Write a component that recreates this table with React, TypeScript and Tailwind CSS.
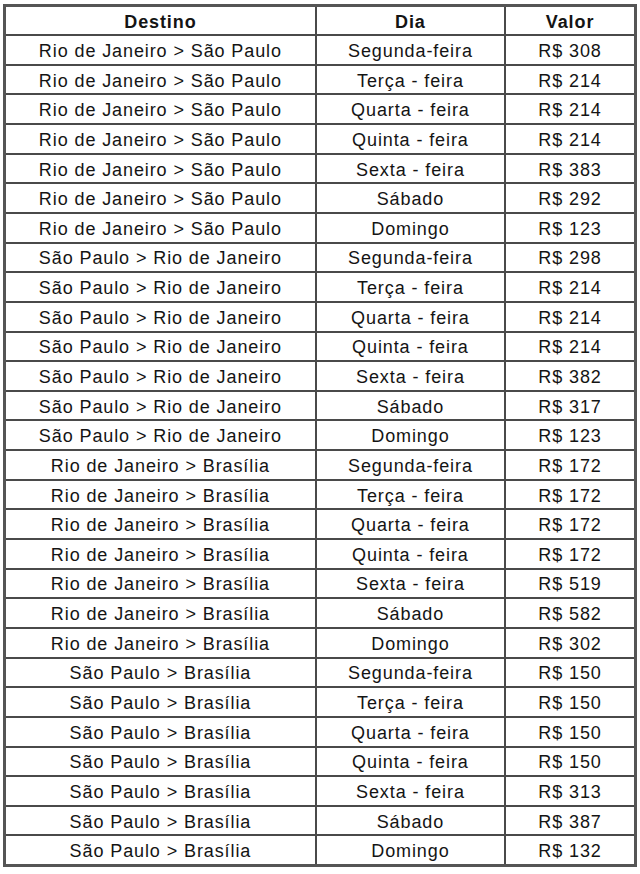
const ROUTES = [
  { route: 'Rio de Janeiro > São Paulo', prices: [308, 214, 214, 214, 383, 292, 123] },
  { route: 'São Paulo > Rio de Janeiro', prices: [298, 214, 214, 214, 382, 317, 123] },
  { route: 'Rio de Janeiro > Brasília', prices: [172, 172, 172, 172, 519, 582, 302] },
  { route: 'São Paulo > Brasília', prices: [150, 150, 150, 150, 313, 387, 132] },
]

const DAYS = ['Segunda-feira', 'Terça - feira', 'Quarta - feira', 'Quinta - feira', 'Sexta - feira', 'Sábado', 'Domingo']

const cell = 'border-2 border-[#4a4a4a] text-center align-middle p-0 pt-[2px]'

export default function App() {
  const rows = ROUTES.flatMap(r => r.prices.map((p, i) => ({ route: r.route, day: DAYS[i], price: p })))

  return (
    <div className="w-[640px] h-[874px] bg-white pt-[4px] pl-[3px]">
      <table
        className="border-collapse border-[3px] border-[#555] w-[634px] text-[18px] tracking-[0.9px] text-[#141414] leading-none"
        style={{ fontFamily: '"Liberation Sans", Arial, sans-serif' }}
      >
        <colgroup>
          <col className="w-[313px]" />
          <col className="w-[190px]" />
          <col className="w-[131px]" />
        </colgroup>
        <thead>
          <tr className="h-[29.65px] font-bold">
            <th className={cell}>Destino</th>
            <th className={cell}>Dia</th>
            <th className={cell}>Valor</th>
          </tr>
        </thead>
        <tbody>
          {rows.map((r, i) => (
            <tr key={i} className="h-[29.65px]">
              <td className={cell}>{r.route}</td>
              <td className={cell}>{r.day}</td>
              <td className={cell}>R$ {r.price}</td>
            </tr>
          ))}
        </tbody>
      </table>
    </div>
  )
}
